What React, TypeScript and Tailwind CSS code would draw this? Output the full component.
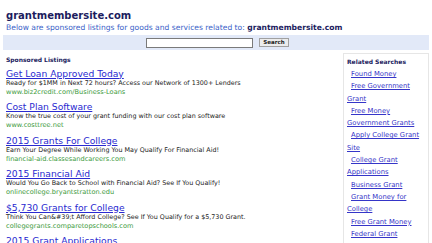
const listings = [
  {
    title: "Get Loan Approved Today",
    desc: "Ready for $1MM in Next 72 hours? Access our Network of 1300+ Lenders",
    url: "www.biz2credit.com/Business-Loans",
  },
  {
    title: "Cost Plan Software",
    desc: "Know the true cost of your grant funding with our cost plan software",
    url: "www.costtree.net",
  },
  {
    title: "2015 Grants For College",
    desc: "Earn Your Degree While Working You May Qualify For Financial Aid!",
    url: "financial-aid.classesandcareers.com",
  },
  {
    title: "2015 Financial Aid",
    desc: "Would You Go Back to School with Financial Aid? See If You Qualify!",
    url: "onlinecollege.bryantstratton.edu",
  },
  {
    title: "$5,730 Grants for College",
    desc: "Think You Can&#39;t Afford College? See If You Qualify for a $5,730 Grant.",
    url: "collegegrants.comparetopschools.com",
  },
  {
    title: "2015 Grant Applications",
    desc: "Apply for Grants Online Today. See If You Qualify!",
    url: "www.grantapplications.org",
  },
];

const related: { lines: string[]; indent: boolean }[] = [
  { lines: ["Found Money"], indent: true },
  { lines: ["Free Government", "Grant"], indent: true },
  { lines: ["Free Money"], indent: true },
  { lines: ["Government Grants"], indent: false },
  { lines: ["Apply College Grant", "Site"], indent: true },
  { lines: ["College Grant", "Applications"], indent: true },
  { lines: ["Business Grant"], indent: true },
  { lines: ["Grant Money for", "College"], indent: true },
  { lines: ["Free Grant Money"], indent: true },
  { lines: ["Federal Grant"], indent: true },
  { lines: ["Grants For Women"], indent: false },
];

export default function App() {
  return (
    <div
      className="w-[432px] h-[243px] overflow-hidden bg-white"
      style={{ fontFamily: '"DejaVu Sans", Verdana, sans-serif' }}
    >
      <div className="pt-[10px] pl-[6px] text-[10px] leading-[12px] font-bold text-[#1c1c5e]">
        grantmembersite.com
      </div>
      <div className="mt-px pl-[6px] text-[7.6px] leading-[10px] text-[#3a62c8] whitespace-nowrap">
        Below are sponsored listings for goods and services related to:{" "}
        <span className="font-bold text-[#1c1c5e]">grantmembersite.com</span>
      </div>

      <div className="mt-[2px] mx-[3px] h-[15px] bg-[#e2e9f8] flex items-center">
        <div className="ml-[143px] w-[107px] h-[10px] bg-white border border-[#7a7a7a]" />
        <button className="ml-[6px] w-[30px] h-[9px] bg-[#ececec] border border-[#a0a0a0] text-[5.5px] leading-[7px] font-bold text-[#222]">
          Search
        </button>
      </div>

      <div className="flex mt-[3px]">
        <div className="flex-1 pl-[6px] pt-[3px]">
          <div className="text-[6px] leading-[8px] font-bold text-[#1c1c5e]">
            Sponsored Listings
          </div>
          <div className="mt-[3.5px] flex flex-col gap-[4.5px]">
            {listings.map((l) => (
              <div key={l.title} className="whitespace-nowrap">
                <a className="block text-[9.2px] leading-[11px] underline text-[#2a2ad0]">
                  {l.title}
                </a>
                <div className="text-[6.4px] leading-[9px] text-[#222]">{l.desc}</div>
                <div className="text-[6.6px] leading-[9px] text-[#3c9a3c]">{l.url}</div>
              </div>
            ))}
          </div>
        </div>

        <div className="w-[86px] mr-[3px] h-[200px] border border-[#e6e6e6] pl-[3px] pt-[3px]">
          <div className="text-[6px] leading-[10px] font-bold text-[#1c1c5e]">
            Related Searches
          </div>
          <div className="mt-px text-[6.8px] leading-[12.3px] text-[#3535c8]">
            {related.map((r) => (
              <a
                key={r.lines.join(" ")}
                className={`block underline whitespace-nowrap ${r.indent ? "indent-[4px]" : ""}`}
              >
                {r.lines.map((line, i) => (
                  <span key={line}>
                    {i > 0 && <br />}
                    {line}
                  </span>
                ))}
              </a>
            ))}
          </div>
        </div>
      </div>
    </div>
  );
}
